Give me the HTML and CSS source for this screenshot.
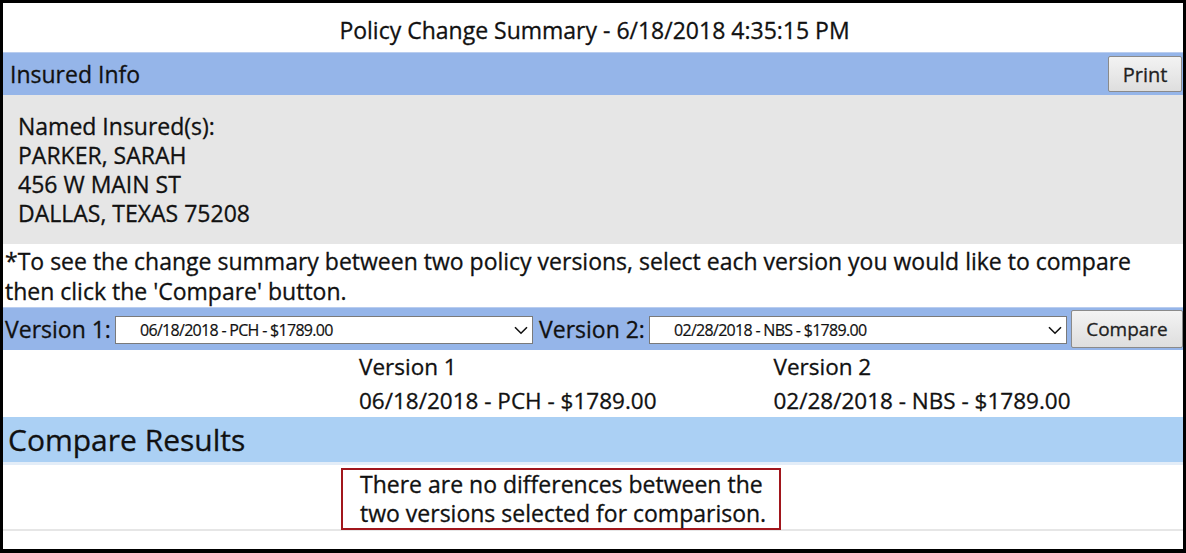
FILE: index.html
```html
<!DOCTYPE html>
<html lang="en">
<head>
<meta charset="utf-8">
<title>Policy Change Summary</title>
<link rel="stylesheet" href="styles.css">
</head>
<body>
<div class="frame">
  <div class="title">Policy Change Summary - 6/18/2018 4:35:15 PM</div>

  <div class="bar insured-bar">
    <span class="bar-label">Insured Info</span>
    <button class="btn print-btn" type="button">Print</button>
  </div>

  <div class="insured-info">
    <div>Named Insured(s):</div>
    <div>PARKER, SARAH</div>
    <div>456 W MAIN ST</div>
    <div>DALLAS, TEXAS 75208</div>
  </div>

  <div class="instructions">*To see the change summary between two policy versions, select each version you would like to compare then click the 'Compare' button.</div>

  <div class="bar version-bar">
    <label class="version-label">Version 1:</label>
    <div class="select-wrap">
      <select class="version-select"><option>06/18/2018 - PCH - $1789.00</option></select>
      <svg class="chevron" width="14" height="9" viewBox="0 0 14 9"><path d="M1 1.2 L7 7.2 L13 1.2" fill="none" stroke="#111" stroke-width="1.6"/></svg>
    </div>
    <label class="version-label">Version 2:</label>
    <div class="select-wrap">
      <select class="version-select"><option>02/28/2018 - NBS - $1789.00</option></select>
      <svg class="chevron" width="14" height="9" viewBox="0 0 14 9"><path d="M1 1.2 L7 7.2 L13 1.2" fill="none" stroke="#111" stroke-width="1.6"/></svg>
    </div>
    <button class="btn compare-btn" type="button">Compare</button>
  </div>

  <div class="versions">
    <div class="versions-spacer"></div>
    <div class="version-col">
      <div>Version 1</div>
      <div>06/18/2018 - PCH - $1789.00</div>
    </div>
    <div class="version-col">
      <div>Version 2</div>
      <div>02/28/2018 - NBS - $1789.00</div>
    </div>
  </div>

  <div class="results-bar">Compare Results</div>

  <div class="results">
    <div class="message">There are no differences between the<br>two versions selected for comparison.</div>
  </div>
</div>
</body>
</html>
```

FILE: styles.css
```css
html, body {
  margin: 0;
  padding: 0;
  background: #000;
}

body {
  font-family: "Open Sans", "Noto Sans", sans-serif;
  color: #111;
  -webkit-text-stroke: 0.3px #111;
}

.frame {
  box-sizing: border-box;
  width: 1186px;
  height: 553px;
  border-style: solid;
  border-color: #000;
  border-width: 3px 3px 4px 3px;
  background: #fff;
  display: flex;
  flex-direction: column;
}

.title {
  height: 49px;
  display: flex;
  align-items: center;
  justify-content: center;
  font-size: 23px;
  padding-top: 5px;
  padding-left: 3px;
  box-sizing: border-box;
}

.bar {
  display: flex;
  align-items: center;
  background: #95b5e9;
  border-top: 1px solid #b9cdef;
  box-sizing: border-box;
}

.insured-bar {
  height: 43px;
  justify-content: space-between;
}

.bar-label {
  font-size: 23px;
  padding-left: 7px;
}

.btn {
  font-family: "Open Sans", "Noto Sans", sans-serif;
  color: #222;
  -webkit-text-stroke: 0.3px #222;
  background: linear-gradient(#f3f3f3, #dedede);
  border: 1px solid #8a8a8a;
  border-radius: 2px;
  padding: 0;
  cursor: pointer;
}

.print-btn {
  width: 74px;
  height: 36px;
  margin-right: 1px;
  font-size: 20px;
}

.insured-info {
  background: #e6e6e6;
  height: 149px;
  box-sizing: border-box;
  padding: 17px 0 0 15px;
  font-size: 23px;
  line-height: 29px;
}

.instructions {
  height: 63px;
  box-sizing: border-box;
  padding: 2px 0 0 2px;
  font-size: 23px;
  line-height: 30px;
}

.version-bar {
  height: 43px;
}

.version-label {
  font-size: 23px;
  padding-left: 2px;
  width: 112px;
  box-sizing: border-box;
  white-space: nowrap;
}

.select-wrap {
  position: relative;
  width: 418px;
  height: 28px;
  margin-top: 2px;
  margin-right: 4px;
}

.version-select {
  -webkit-appearance: none;
  appearance: none;
  width: 100%;
  height: 100%;
  box-sizing: border-box;
  border: 1px solid #7a7a7a;
  border-radius: 0;
  background: #fff;
  font-family: "Open Sans", "Noto Sans", sans-serif;
  font-size: 16px;
  letter-spacing: -0.7px;
  color: #111;
  -webkit-text-stroke: 0.2px #111;
  padding: 0 0 0 24px;
}

.chevron {
  position: absolute;
  right: 5px;
  top: 10px;
  pointer-events: none;
}

.compare-btn {
  width: 112px;
  height: 38px;
  margin-left: 0;
  font-size: 19px;
}

.versions {
  display: flex;
  height: 67px;
  font-size: 22.5px;
  line-height: 34px;
}

.versions-spacer {
  width: 30%;
}

.version-col {
  width: 35%;
  padding-left: 5px;
}

.results-bar {
  height: 48px;
  box-sizing: border-box;
  background: #abd0f4;
  border-bottom: 3px solid #e3edf8;
  font-size: 30px;
  padding-left: 5px;
  display: flex;
  align-items: center;
}

.results {
  height: 66px;
  box-sizing: border-box;
  border-bottom: 2px solid #e6e6e6;
  padding: 3px 0 0 338px;
}

.message {
  display: inline-block;
  border: 2px solid #a1161c;
  padding: 0 13px 0 17px;
  font-size: 23px;
  line-height: 29px;
  height: 62px;
  box-sizing: border-box;
  white-space: nowrap;
}
```
